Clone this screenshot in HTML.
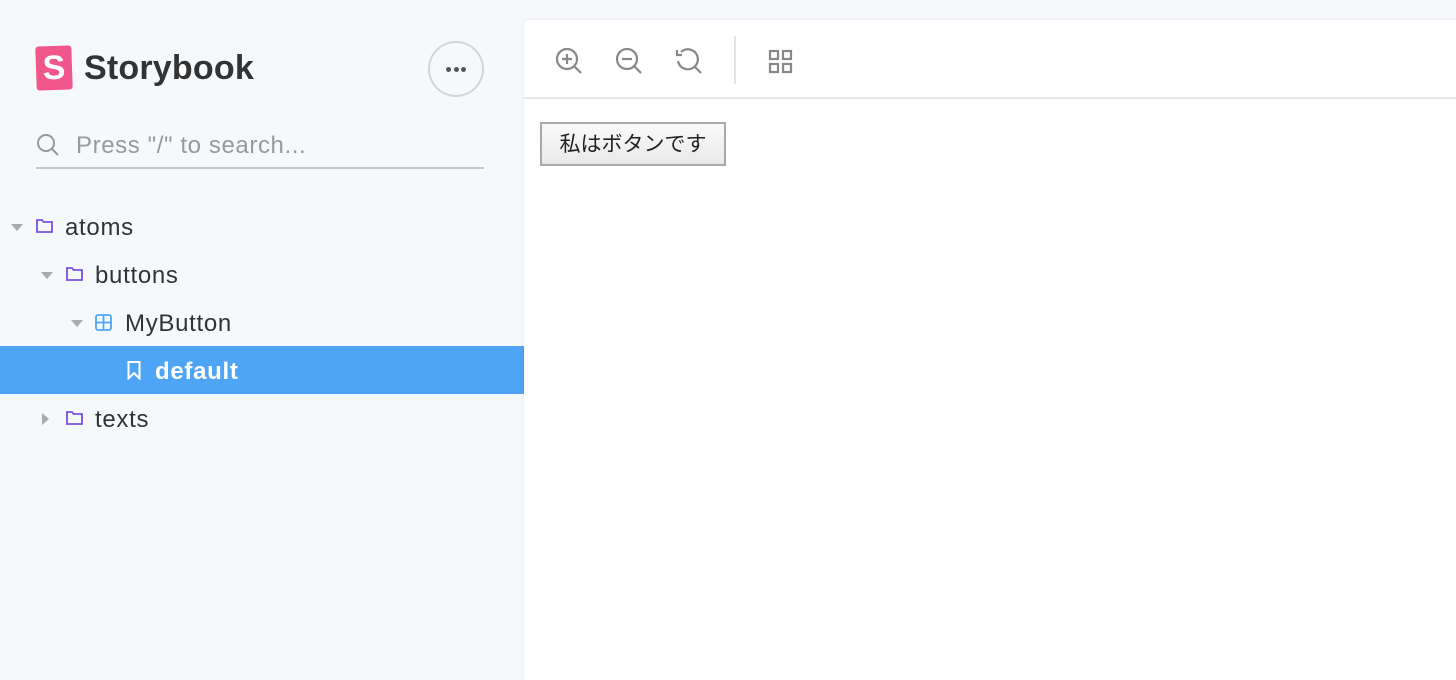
<!DOCTYPE html>
<html><head><meta charset="utf-8"><style>
*{box-sizing:border-box;margin:0;padding:0}
body{width:1456px;height:662px;background:#f6f9fc;font-family:"Liberation Sans","Noto Sans CJK JP",sans-serif;position:relative;overflow:hidden;color:#333}
.abs{position:absolute}
.logo{left:36px;top:46px;width:36px;height:44px;background:#f0568a;border-radius:3px;transform:rotate(-2deg);color:#fff;font-weight:bold;font-size:34px;text-align:center;line-height:44px}
.title{left:84px;top:49px;font-size:34px;font-weight:bold;color:#333;letter-spacing:0.2px}
.more{left:428px;top:41px;width:56px;height:56px;border:2px solid #d4d4d4;border-radius:50%}
.more i{position:absolute;top:24px;width:5px;height:5px;border-radius:50%;background:#555}
.search{left:76px;top:132px;font-size:24px;color:#999;letter-spacing:0.6px}
.line{left:36px;top:167px;width:448px;height:2px;background:#c7c7c7}
.row{position:absolute;font-size:24px;color:#333;height:48px;line-height:50px;letter-spacing:0.7px}
.tri{position:absolute;width:0;height:0;border-left:6px solid transparent;border-right:6px solid transparent;border-top:7px solid #aaa}
.sel{left:0;top:346px;width:524px;height:48px;background:#4ea5f5}
.panel{left:524px;top:20px;width:940px;height:660px;background:#fff;border-radius:6px 0 0 0;box-shadow:0 0 6px rgba(0,0,0,.06)}
.tb{left:524px;top:97px;width:932px;height:2px;background:#e6e6e6}
.btn{left:540px;top:122px;width:186px;height:44px;border:2px solid #a9a9a9;background:linear-gradient(#fafafa,#e9e9e9);font-size:21px;text-align:center;line-height:42px;color:#222}
</style></head><body>
<div class="abs logo">S</div>
<div class="abs title">Storybook</div>
<div class="abs more"><i style="left:16px"></i><i style="left:23.5px"></i><i style="left:31px"></i></div>
<svg class="abs" style="left:36px;top:133px" width="26" height="26" viewBox="0 0 26 26" fill="none" stroke="#999" stroke-width="2"><circle cx="10" cy="10" r="8"/><path d="M16 16l6 6"/></svg>
<div class="abs search">Press "/" to search...</div>
<div class="abs line"></div>

<div class="tri" style="left:11px;top:224px"></div>
<svg class="abs" style="left:36px;top:219px" width="17" height="14" viewBox="0 0 17 14" fill="none" stroke="#7a4fe0" stroke-width="1.8"><path d="M1 1h5l1.5 2H16v10H1z"/></svg>
<div class="row" style="left:65px;top:203px">atoms</div>

<div class="tri" style="left:41px;top:272px"></div>
<svg class="abs" style="left:66px;top:267px" width="17" height="14" viewBox="0 0 17 14" fill="none" stroke="#7a4fe0" stroke-width="1.8"><path d="M1 1h5l1.5 2H16v10H1z"/></svg>
<div class="row" style="left:95px;top:251px">buttons</div>

<div class="tri" style="left:71px;top:320px"></div>
<svg class="abs" style="left:95px;top:314px" width="17" height="17" viewBox="0 0 17 17" fill="none" stroke="#4ea5f5" stroke-width="1.8"><rect x="1" y="1" width="15" height="15" rx="2"/><path d="M8.5 1v15M1 8.5h15"/></svg>
<div class="row" style="left:125px;top:299px">MyButton</div>

<div class="abs sel"></div>
<svg class="abs" style="left:127px;top:361px" width="14" height="19" viewBox="0 0 14 19" fill="none" stroke="#fff" stroke-width="2"><path d="M1.5 1h11v16.5L7 12l-5.5 5.5z"/></svg>
<div class="row" style="left:155px;top:347px;color:#fff;font-weight:bold">default</div>

<div class="tri" style="left:42px;top:413px;border-top:6px solid transparent;border-bottom:6px solid transparent;border-left:7px solid #aaa;border-right:0"></div>
<svg class="abs" style="left:66px;top:411px" width="17" height="14" viewBox="0 0 17 14" fill="none" stroke="#7a4fe0" stroke-width="1.8"><path d="M1 1h5l1.5 2H16v10H1z"/></svg>
<div class="row" style="left:95px;top:395px">texts</div>

<div class="abs panel"></div>
<svg class="abs" style="left:554px;top:46px" width="30" height="30" viewBox="0 0 30 30" fill="none" stroke="#888" stroke-width="2.2"><circle cx="13" cy="13" r="10"/><path d="M20 20l7 7M13 8v10M8 13h10"/></svg>
<svg class="abs" style="left:614px;top:46px" width="30" height="30" viewBox="0 0 30 30" fill="none" stroke="#888" stroke-width="2.2"><circle cx="13" cy="13" r="10"/><path d="M20 20l7 7M8 13h10"/></svg>
<svg class="abs" style="left:674px;top:46px" width="30" height="30" viewBox="0 0 30 30" fill="none" stroke="#888" stroke-width="2.2"><path d="M7 6A10 10 0 1 1 4 15"/><path d="M20 20l7 7"/><path d="M3 4v5h5" /></svg>
<div class="abs" style="left:734px;top:36px;width:2px;height:48px;background:#e3e3e3"></div>
<svg class="abs" style="left:768px;top:49px" width="26" height="26" viewBox="0 0 26 26" fill="none" stroke="#888" stroke-width="2.2"><rect x="2" y="2" width="8" height="8"/><rect x="15" y="2" width="8" height="8"/><rect x="2" y="15" width="8" height="8"/><rect x="15" y="15" width="8" height="8"/></svg>
<div class="abs tb"></div>
<div class="abs btn">私はボタンです</div>
</body></html>
